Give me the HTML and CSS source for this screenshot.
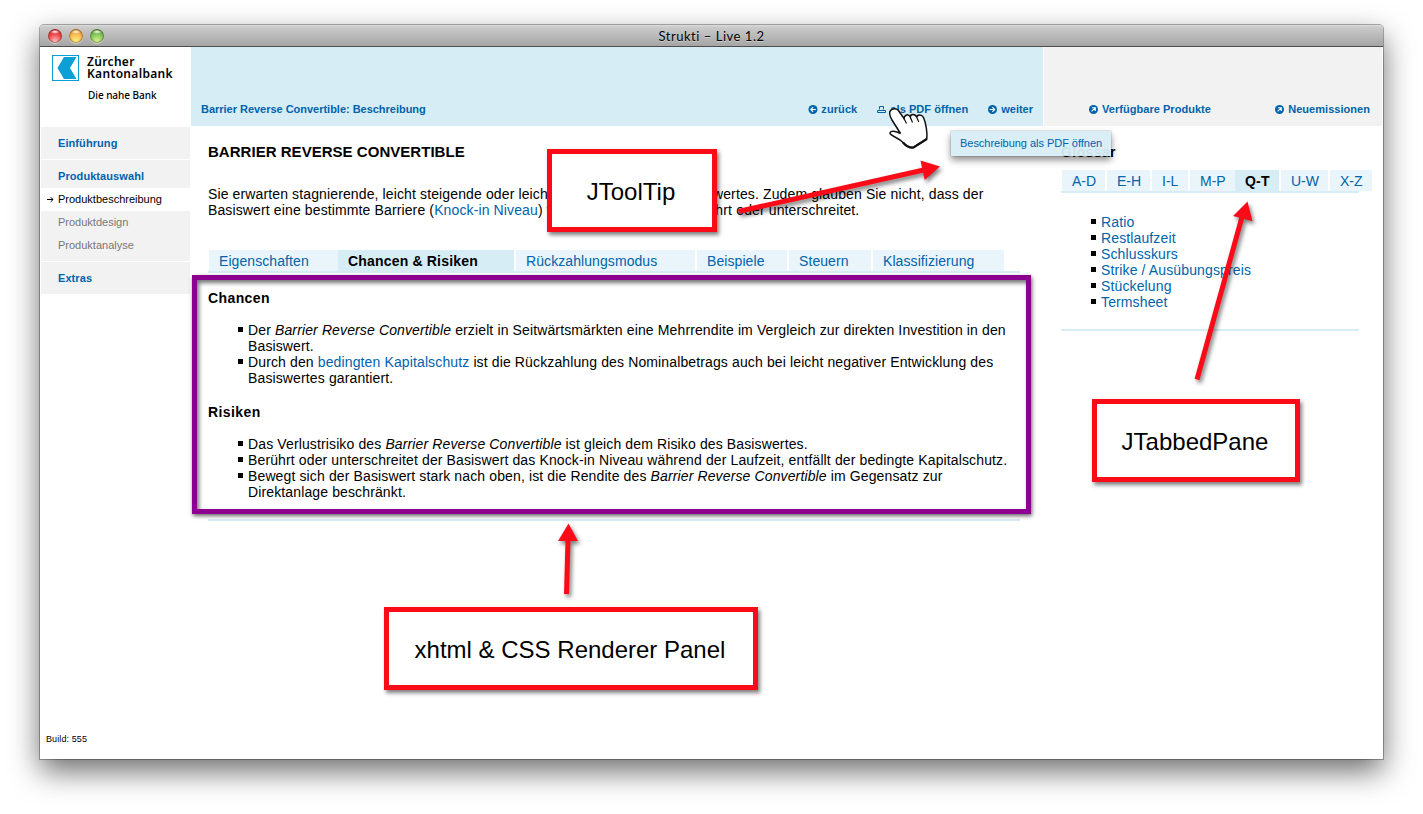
FILE: index.html
```html
<!DOCTYPE html>
<html lang="de">
<head>
<meta charset="utf-8">
<title>Strukti – Live 1.2</title>
<link rel="stylesheet" href="styles.css">
</head>
<body>
<svg class="defs" width="0" height="0">
  <defs>
    <symbol id="ic-left" viewBox="0 0 9 9"><circle cx="4.5" cy="4.5" r="4.5" fill="#0063ab"/><path d="M7.3 4.5H2.4M4.6 2.2L2.3 4.5l2.3 2.3" fill="none" stroke="#fff" stroke-width="1.1"/></symbol>
    <symbol id="ic-right" viewBox="0 0 9 9"><circle cx="4.5" cy="4.5" r="4.5" fill="#0063ab"/><path d="M1.7 4.5h4.9M4.4 2.2l2.3 2.3-2.3 2.3" fill="none" stroke="#fff" stroke-width="1.1"/></symbol>
    <symbol id="ic-up" viewBox="0 0 9 9"><circle cx="4.5" cy="4.5" r="4.5" fill="#0063ab"/><path d="M2.6 6.4l3.6-3.6M3 2.7h3.3V6" fill="none" stroke="#fff" stroke-width="1.1"/></symbol>
  </defs>
</svg>
<div class="window">
  <div class="titlebar">
    <span class="light red"></span><span class="light yellow"></span><span class="light green"></span>
    <span class="title">Strukti – Live 1.2</span>
  </div>
  <div class="app">
    <aside class="side">
      <div class="brand">
        <svg class="logo" width="27" height="26" viewBox="0 0 27 26"><rect x=".5" y=".5" width="26" height="25" fill="#fff" stroke="#0b9fd6"/><path d="M12 2h12.500l-6.500 11 6.500 11H12L5.500 13z" fill="#0b9fd6"/></svg>
        <div class="bank">Zürcher<br>Kantonalbank<div class="claim">Die nahe Bank</div></div>
      </div>
      <nav class="menu">
        <div class="group one">Einführung</div>
        <div class="group"><div class="head">Produktauswahl</div>
          <div class="sub active"><svg width="7" height="7" viewBox="0 0 7 7"><path d="M0 3.500h6M3.700 1.200L6 3.500 3.700 5.800" fill="none" stroke="#000"/></svg>Produktbeschreibung</div>
          <div class="sub">Produktdesign</div>
          <div class="sub">Produktanalyse</div>
        </div>
        <div class="group one">Extras</div>
      </nav>
      <div class="build">Build: 555</div>
    </aside>
    <main class="main">
      <header class="bar">
        <span class="crumb">Barrier Reverse Convertible: Beschreibung</span>
        <span class="act back"><svg width="10" height="9"><use href="#ic-left"/></svg>zurück</span>
        <span class="act pdf"><svg width="9" height="7" viewBox="0 0 9 7"><path d="M2.500 3.500v-3h4v3M.5 6.500v-2h8v2z" fill="none" stroke="#0063ab"/></svg>als PDF öffnen</span>
        <span class="act next"><svg width="9" height="9"><use href="#ic-right"/></svg>weiter</span>
      </header>
      <section class="body">
        <h1>BARRIER REVERSE CONVERTIBLE</h1>
        <p class="intro">Sie erwarten stagnierende, leicht steigende oder leicht fallende Kurse des Basiswertes. Zudem glauben Sie nicht, dass der<br>Basiswert eine bestimmte Barriere (<a>Knock-in Niveau</a>) <span class="wide">während der Laufzeit berührt</span> oder unterschreitet.</p>
        <div class="tabs">
          <span class="tab t1">Eigenschaften</span><span class="tab t2 on">Chancen &amp; Risiken</span><span class="tab t3">Rückzahlungsmodus</span><span class="tab t4">Beispiele</span><span class="tab t5">Steuern</span><span class="tab t6">Klassifizierung</span>
        </div>
        <article class="doc">
          <h2>Chancen</h2>
          <ul>
            <li>Der <em>Barrier Reverse Convertible</em> erzielt in Seitwärtsmärkten eine Mehrrendite im Vergleich zur direkten Investition in den<br>Basiswert.</li>
            <li>Durch den <a>bedingten Kapitalschutz</a> ist die Rückzahlung des Nominalbetrags auch bei leicht negativer Entwicklung des<br>Basiswertes garantiert.</li>
          </ul>
          <h2>Risiken</h2>
          <ul>
            <li>Das Verlustrisiko des <em>Barrier Reverse Convertible</em> ist gleich dem Risiko des Basiswertes.</li>
            <li>Berührt oder unterschreitet der Basiswert das Knock-in Niveau während der Laufzeit, entfällt der bedingte Kapitalschutz.</li>
            <li>Bewegt sich der Basiswert stark nach oben, ist die Rendite des <em>Barrier Reverse Convertible</em> im Gegensatz zur<br>Direktanlage beschränkt.</li>
          </ul>
        </article>
      </section>
    </main>
    <aside class="right">
      <header class="links">
        <span class="act"><svg width="9" height="9"><use href="#ic-up"/></svg>Verfügbare Produkte</span>
        <span class="act"><svg width="9" height="9"><use href="#ic-up"/></svg>Neuemissionen</span>
      </header>
      <section class="glossary">
        <h2>Glossar</h2>
        <div class="tabs">
          <span class="tab g1">A-D</span><span class="tab g2">E-H</span><span class="tab g3">I-L</span><span class="tab g4">M-P</span><span class="tab g5 on">Q-T</span><span class="tab g6">U-W</span><span class="tab g7">X-Z</span>
        </div>
        <ul>
          <li>Ratio</li><li>Restlaufzeit</li><li>Schlusskurs</li><li>Strike / Ausübungspreis</li><li>Stückelung</li><li>Termsheet</li>
        </ul>
      </section>
    </aside>
  </div>
</div>
<div class="frame"></div>
<div class="tip">Beschreibung als PDF öffnen</div>
<div class="callout c1">JToolTip</div>
<div class="callout c2">JTabbedPane</div>
<div class="callout c3">xhtml &amp; CSS Renderer Panel</div>
<svg class="overlay" width="1423" height="814" viewBox="0 0 1423 814">
  <g class="arrow">
    <path d="M738.500 211.500L926 169.500M1197 379.500L1242 217M566.500 594L568 540" fill="none" stroke="#fb0b17" stroke-width="5"/>
    <path d="M940 166.500L920.500 160.500 924.700 180zM1247.500 201.500L1233 216 1252.500 221.200zM568.500 523.500L558 541h20z" fill="#fb0b17"/>
  </g>
  <path class="hand" d="M890.500 110.500C888.500 113 890 116.500 892 120L900.500 133.500C896 131 890 130 890 133.500 892 136.500 899 138 903 142.500 906 146 910 148 913.500 147.500L926.800 139C927.500 133 926 123 923.500 117.500 921.500 114 917 114.500 916.800 117.500 915.500 113.500 910.500 113.500 910.300 117 908.500 113.500 904.500 114.500 904 118.500L898 110C896 108 892.500 108.300 890.500 110.500z"/>
  <path d="M904 118.500l2.500 5M910.300 117l2.200 5.500M916.800 117.500l2 4.500" fill="none" stroke="#111" stroke-width="1.200"/>
  <path d="M903 142.500C906 146 910 148 913.500 147.500L926.800 139" fill="none" stroke="#111" stroke-width="2.200"/>
</svg>
</body>
</html>
```
FILE: styles.css
```css
* { box-sizing: border-box; }
body { margin: 0; width: 1423px; height: 814px; overflow: hidden; background: #fff; padding: 25px 0 0 40px; font-family: "Liberation Sans", Arial, sans-serif; font-size: 14px; line-height: 16px; color: #000; position: relative; }
h1, h2, p, ul { margin: 0; padding: 0; }
a { color: #0063ab; }
.defs { position: absolute; }
.window { width: 1343px; height: 734px; border-radius: 4px 4px 0 0; background: #fff; box-shadow: 0 0 0 1px rgba(0,0,0,.3), 0 12px 30px rgba(0,0,0,.58); display: flex; flex-direction: column; }
.titlebar { height: 22px; flex: none; display: flex; align-items: center; padding-left: 8px; gap: 7px; border-radius: 4px 4px 0 0; background: linear-gradient(#dedede 0, #cbcbcb 2px, #a5a5a5 21px); border-bottom: 1px solid #4d4d4d; }
.light { width: 14px; height: 14px; border-radius: 50%; box-shadow: inset 0 0 1px 1px rgba(50,20,0,.4), 0 1px 0 rgba(255,255,255,.4); }
.red { background: radial-gradient(ellipse 5px 2px at 50% 20%, #fff, transparent), radial-gradient(circle at 50% 90%, #ffc3c3, #ef4d50 50%, #c31c26); }
.yellow { background: radial-gradient(ellipse 5px 2px at 50% 20%, #fff, transparent), radial-gradient(circle at 50% 90%, #fff388, #f7b74b 55%, #d27a20); }
.green { background: radial-gradient(ellipse 5px 2px at 50% 20%, #fff, transparent), radial-gradient(circle at 50% 90%, #d8f79a, #80c256 55%, #43892b); }
.title { flex: 1; text-align: center; margin-right: 71px; font: 13px/20px Lato, sans-serif; letter-spacing: .53px; text-shadow: 0 1px 0 rgba(255,255,255,.4); }
.app { flex: 1; display: grid; grid-template-columns: 151px 852px 339px; }
.side { display: flex; flex-direction: column; padding-left: 1px; }
.brand { height: 80px; display: flex; padding: 8px 0 0 11px; gap: 8px; }
.logo { flex: none; }
.bank { font: 600 12px/12px "Noto Sans", sans-serif; letter-spacing: .33px; padding-top: 1px; white-space: nowrap; }
.claim { font: 500 10px/12px "Noto Sans", sans-serif; letter-spacing: -.05px; margin: 9px 0 0 1px; }
.menu { width: 149px; display: flex; flex-direction: column; gap: 1px; font-size: 11px; }
.group { background: #f2f2f2; color: #0063ab; font-weight: bold; }
.one { height: 32px; padding: 8px 0 0 17px; letter-spacing: .08px; }
.head { height: 28px; padding: 8px 0 0 17px; letter-spacing: .08px; }
.sub { height: 23px; line-height: 23px; padding-left: 17px; color: #777; font-weight: normal; }
.sub.active { background: #fff; color: #000; padding-left: 6px; display: flex; align-items: center; gap: 4px; }
.group:nth-child(2) { height: 101px; }
.build { margin-top: auto; padding: 0 0 12px 5px; font-size: 9px; letter-spacing: .1px; }
.bar { height: 79px; background: #d7edf5; display: flex; align-items: flex-end; padding: 0 10px 9px 10px; color: #0063ab; font: bold 11px/16px "Liberation Sans", Arial, sans-serif; }
.crumb { flex: 1; letter-spacing: -.02px; }
.act { display: flex; align-items: center; gap: 4px; white-space: nowrap; }
.act svg { flex: none; }
.back { letter-spacing: .1px; gap: 3px; }
.pdf { letter-spacing: .06px; }
.pdf, .next { margin-left: 20px; }
.body { padding: 18px 0 0 17px; }
h1, h2 { font-size: 14px; line-height: 16px; }
h1 { font-size: 15px; letter-spacing: .03px; }
h2 { letter-spacing: .4px; }
.intro { margin-top: 26px; white-space: nowrap; letter-spacing: .125px; }
.wide { letter-spacing: .23px; }
.tabs { display: flex; gap: 2px; height: 23px; border-bottom: 2px solid #d7edf5; padding-left: 1px; white-space: nowrap; }
.body .tabs { width: 812px; margin-top: 32px; letter-spacing: .08px; }
.tab { flex: none; height: 21px; line-height: 22px; padding-left: 10px; background: #e9f5fa; color: #0063ab; }
.tab.on { background: #d7edf5; color: #000; font-weight: bold; margin-left: -2px; letter-spacing: .18px; }
.t1 { width: 129px; } .t2 { width: 176px; } .t3 { width: 179px; } .t4 { width: 90px; } .t5 { width: 82px; } .t6 { width: 131px; }
.doc { width: 812px; height: 248px; border-bottom: 2px solid #d7edf5; padding-top: 17px; white-space: nowrap; }
.doc ul { list-style: none; margin: 16px 0 18px; padding-left: 40px; letter-spacing: .127px; }
li { position: relative; }
li::before { content: ""; position: absolute; left: -10px; top: 5px; width: 5px; height: 5px; background: #000; }
.right { width: 339px; padding-left: 1px; }
.links { height: 79px; background: #f2f2f2; display: flex; align-items: flex-end; justify-content: space-between; padding: 0 12px 9px 45px; color: #0063ab; font: bold 11px/16px "Liberation Sans", Arial, sans-serif; letter-spacing: .04px; }
.glossary { padding: 18px 0 0 17px; }
.glossary .tabs { margin-top: 10px; width: 298px; }
.g1, .g2 { width: 43px; } .g3 { width: 36px; } .g4 { width: 45px; } .g5 { width: 44px; } .g6 { width: 47px; } .g7 { width: 42px; }
.glossary ul { list-style: none; width: 298px; height: 138px; padding: 21px 0 0 40px; color: #0063ab; border-bottom: 2px solid #d7edf5; letter-spacing: .127px; }
.frame { position: absolute; left: 192px; top: 275px; width: 839px; height: 239px; border: 5px solid #8d008f; box-shadow: 1px 2px 4px rgba(0,0,0,.6), inset 2px 3px 4px rgba(0,0,0,.55); }
.tip { position: absolute; left: 951px; top: 131px; width: 160px; height: 25px; padding-left: 9px; background: rgba(215,237,245,.95); color: #0063ab; font-size: 11px; letter-spacing: -.03px; line-height: 25px; white-space: nowrap; box-shadow: 0 0 1px rgba(0,0,0,.5), 0 4px 7px rgba(0,0,0,.45); }
.callout { position: absolute; height: 83px; border: 5px solid #fb0b17; background: #fff; font-size: 24px; line-height: 75px; text-align: center; white-space: nowrap; padding-right: 2px; box-shadow: 2px 3px 4px rgba(0,0,0,.5); }
.c1 { left: 547px; top: 149px; width: 170px; }
.c2 { left: 1092px; top: 399px; width: 208px; }
.c3 { left: 384px; top: 607px; width: 374px; }
.overlay { position: absolute; left: 0; top: 0; }
.arrow { filter: drop-shadow(2px 3px 2px rgba(0,0,0,.5)); }
.hand { fill: #fff; stroke: #111; stroke-width: 1.5; }
```
